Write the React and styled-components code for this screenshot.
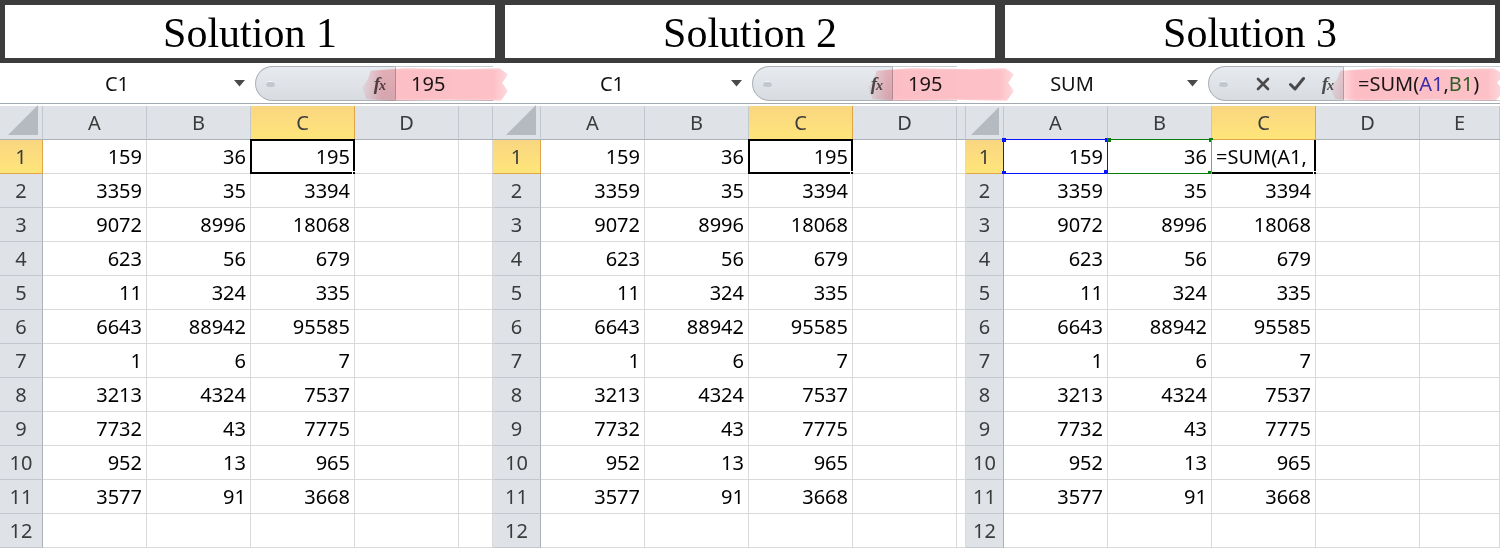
import React from 'react';
import styled, { createGlobalStyle, css } from 'styled-components';

const GlobalStyle = createGlobalStyle`
  html, body { margin: 0; padding: 0; background: #fff; }
  body { width: 1500px; height: 550px; overflow: hidden; font-family: "Noto Sans", "Open Sans", sans-serif; }
  * { box-sizing: border-box; }
`;

const Page = styled.div`
  width: 1500px;
  height: 550px;
  overflow: hidden;
  background: #fff;
`;

const TitleBand = styled.header`
  display: grid;
  grid-template-columns: repeat(3, 1fr);
  gap: 10px;
  padding: 5px;
  height: 63px;
  background: #3c3c3c;
`;

const TitleBox = styled.div`
  background: #fff;
  display: flex;
  align-items: center;
  justify-content: center;
  font-family: "Liberation Serif", "Times New Roman", serif;
  font-size: 42px;
  color: #000;
  padding-top: 2px;
`;

const Sheets = styled.div`
  display: flex;
  position: relative;
`;

const Panel = styled.section`
  width: ${p => p.$w}px;
  flex: none;
  display: flex;
  flex-direction: column;
  overflow: hidden;
`;

const FormulaBar = styled.div`
  display: flex;
  height: 41px;
  padding: 3px 0 2px;
  border-bottom: 1px solid #a3a9b0;
  background: #fff;
`;

const NameBox = styled.div`
  width: ${p => p.$w}px;
  flex: none;
  display: flex;
  align-items: center;
  font-size: 20px;
  color: #111;
`;

const NameText = styled.span`
  flex: 1;
  text-align: center;
  padding-left: 6px;
`;

const Arrow = styled.svg`
  width: 11px;
  height: 7px;
  margin: 0 10px 0 6px;
  flex: none;
`;

const FxArea = styled.div`
  width: ${p => p.$w}px;
  flex: none;
  display: flex;
  align-items: center;
  border: 1px solid #aab1b9;
  border-right: none;
  border-radius: 18px 0 0 18px;
  background: linear-gradient(#e7eaee, #d8dce1);
  padding: 0 10px 0 10px;
`;

const Knob = styled.span`
  width: 9px;
  height: 6px;
  border-radius: 3px;
  background: #c2c7cd;
  box-shadow: inset 0 1px 0 #f4f5f7;
  flex: none;
`;

const Spacer = styled.span`
  flex: 1;
`;

const ToolIcon = styled.svg`
  width: 16px;
  height: 16px;
  flex: none;
  margin-right: ${p => p.$mr || 0}px;
`;

const Fx = styled.span`
  font-family: "Liberation Serif", serif;
  font-style: italic;
  font-weight: bold;
  font-size: 19px;
  color: #4d4d4d;
  letter-spacing: -1px;
  small { font-size: 14px; }
`;

const FormulaInput = styled.div`
  flex: 1;
  display: flex;
  align-items: center;
  border-top: 1px solid #c7ccd2;
  border-bottom: 1px solid #c7ccd2;
  border-left: 1px solid #b3b9c0;
  padding-left: ${p => p.$pl || 15}px;
  font-size: 20px;
  color: #1a1a1a;
  white-space: nowrap;
`;

const RefA = styled.span` color: #3a3ad6; `;
const RefB = styled.span` color: #2f7d2f; `;

const Grid = styled.div`
  margin-top: 2px;
  display: grid;
  grid-template-columns: ${p => p.$cols};
  grid-auto-rows: 34px;
`;

const yellow = css`
  background: linear-gradient(#f9d681, #ffe57a);
  border-right-color: #e0a646;
  border-bottom-color: #e0a646;
`;

const HeadCell = styled.div`
  background: #dfe3e8;
  border-right: 1px solid #c3c8ce;
  border-bottom: 1px solid #a9b0b8;
  display: flex;
  align-items: center;
  justify-content: center;
  font-size: 20px;
  color: #3b3b3b;
  position: relative;
  ${p => p.$sel && yellow}
`;

const RowHead = styled(HeadCell)`
  border-right-color: #a9b0b8;
  border-bottom-color: #c3c8ce;
  ${p => p.$sel && yellow}
`;

const CornerTri = styled.svg`
  position: absolute;
  right: 4px;
  bottom: 4px;
  width: ${p => p.$s}px;
  height: ${p => p.$s}px;
`;

const Cell = styled.div`
  background: #fff;
  border-right: 1px solid #d9d9d9;
  border-bottom: 1px solid #d9d9d9;
  font-size: 20px;
  color: #000;
  line-height: 33px;
  text-align: right;
  padding-right: 4px;
  white-space: nowrap;
  position: relative;
  ${p => p.$edit && css`
    text-align: left;
    padding-left: 4px;
    padding-right: 0;
    overflow: visible;
    border-left: 1px solid #e35be3;
    margin-left: -1px;
  `}
`;

const ActiveFrame = styled.span`
  position: absolute;
  top: -1px;
  left: -1px;
  right: -1px;
  bottom: -1px;
  border: 2px solid #000;
  pointer-events: none;
  ${p => p.$edit && css`
    border-top: none;
    border-left: none;
    top: 0;
    left: 0;
  `}
`;

const Handle = styled.span`
  position: absolute;
  right: -4px;
  bottom: -4px;
  width: 6px;
  height: 6px;
  background: #000;
  border: 1px solid #fff;
`;

const RefFrame = styled.span`
  position: absolute;
  top: -1px;
  left: -1px;
  right: -1px;
  bottom: -1px;
  border: 1px solid ${p => p.$c};
  ${p => p.$noLeft && css`border-left: none;`}
  pointer-events: none;
`;

const RefDot = styled.span`
  position: absolute;
  width: ${p => p.$s}px;
  height: ${p => p.$s}px;
  background: ${p => p.$c};
  ${p => p.$pos}
`;

const Highlight = styled.div`
  position: absolute;
  top: 5px;
  height: 33px;
  left: ${p => p.$l}px;
  width: ${p => p.$w}px;
  background: linear-gradient(90deg, rgba(252, 190, 196, 0.2), rgb(252, 190, 196) 14%, rgb(252, 192, 198) 90%, rgba(252, 192, 198, 0.6));
  mix-blend-mode: multiply;
  filter: blur(1.6px);
  pointer-events: none;
  clip-path: polygon(6% 8%, 30% 0%, 70% 4%, 94% 0%, 100% 20%, 96% 45%, 100% 70%, 95% 100%, 60% 96%, 20% 100%, 3% 94%, 0% 60%, 4% 35%);
`;

const data = [
  [159, 36, 195],
  [3359, 35, 3394],
  [9072, 8996, 18068],
  [623, 56, 679],
  [11, 324, 335],
  [6643, 88942, 95585],
  [1, 6, 7],
  [3213, 4324, 7537],
  [7732, 43, 7775],
  [952, 13, 965],
  [3577, 91, 3668],
  [],
];

const panels = [
  { w: 493, cols: '43px repeat(4, 104px) 34px', lead: false, letters: ['A', 'B', 'C', 'D', ''], nameW: 255, fxW: 140, name: 'C1', edit: false, tri: 30 },
  { w: 464, cols: '48px repeat(4, 104px)', lead: false, letters: ['A', 'B', 'C', 'D'], nameW: 259, fxW: 140, name: 'C1', edit: false, tri: 30 },
  { w: 543, cols: '9px 38px repeat(4, 104px) 80px', lead: true, letters: ['A', 'B', 'C', 'D', 'E'], nameW: 251, fxW: 135, name: 'SUM', edit: true, tri: 28 },
];

function CornerHead({ s }) {
  return (
    <HeadCell>
      <CornerTri $s={s} viewBox="0 0 10 10">
        <polygon points="10,0 10,10 0,10" fill="#b5bac1" />
      </CornerTri>
    </HeadCell>
  );
}

function Bar({ p }) {
  return (
    <FormulaBar>
      <NameBox $w={p.nameW}>
        <NameText>{p.name}</NameText>
        <Arrow viewBox="0 0 11 7"><polygon points="0,0 11,0 5.5,6.5" fill="#4a4a4a" /></Arrow>
      </NameBox>
      <FxArea $w={p.fxW}>
        <Knob />
        <Spacer />
        {p.edit && (
          <>
            <ToolIcon $mr={18} viewBox="0 0 16 16">
              <path d="M3 3 L13 13 M13 3 L3 13" stroke="#4a4a4a" strokeWidth="2.6" strokeLinecap="round" />
            </ToolIcon>
            <ToolIcon $mr={17} viewBox="0 0 16 16">
              <path d="M1.5 8.5 L6 13 L14.5 2.5" stroke="#4a4a4a" strokeWidth="3" fill="none" strokeLinecap="round" strokeLinejoin="round" />
            </ToolIcon>
          </>
        )}
        <Fx>f<small>x</small></Fx>
      </FxArea>
      <FormulaInput $pl={p.edit ? 14 : 15}>
        {p.edit ? (
          <>=SUM(<RefA>A1</RefA>,<RefB>B1</RefB>)</>
        ) : '195'}
      </FormulaInput>
    </FormulaBar>
  );
}

function Sheet({ p }) {
  return (
    <Panel $w={p.w}>
      <Bar p={p} />
      <Grid $cols={p.cols}>
        {p.lead && <HeadCell />}
        <CornerHead s={p.tri} />
        {p.letters.map((l, i) => (
          <HeadCell key={i} $sel={l === 'C'}>{l}</HeadCell>
        ))}
        {data.map((row, r) => (
          <React.Fragment key={r}>
            {p.lead && <Cell />}
            <RowHead $sel={r === 0}>{r + 1}</RowHead>
            {p.letters.map((l, c) => {
              const first = r === 0;
              if (first && p.edit && c === 0) {
                return (
                  <Cell key={c}>
                    {row[c]}
                    <RefFrame $c="#0a14ff" />
                    <RefDot $c="#0a14ff" $s={4} $pos="left:-2px;top:-2px;" />
                    <RefDot $c="#0a14ff" $s={4} $pos="right:-2px;top:-2px;" />
                    <RefDot $c="#0a14ff" $s={4} $pos="left:-2px;bottom:-2px;" />
                    <RefDot $c="#0a14ff" $s={6} $pos="right:-3px;bottom:-3px;" />
                  </Cell>
                );
              }
              if (first && p.edit && c === 1) {
                return (
                  <Cell key={c}>
                    {row[c]}
                    <RefFrame $c="#0b7d0b" $noLeft />
                    <RefDot $c="#0b7d0b" $s={4} $pos="left:-1px;top:-2px;" />
                    <RefDot $c="#0b7d0b" $s={4} $pos="right:-2px;top:-2px;" />
                    <RefDot $c="#0b7d0b" $s={5} $pos="right:-2px;bottom:-3px;" />
                  </Cell>
                );
              }
              if (first && c === 2) {
                return p.edit ? (
                  <Cell key={c} $edit>
                    =SUM(A1,
                    <ActiveFrame $edit />
                    <Handle />
                  </Cell>
                ) : (
                  <Cell key={c}>
                    {row[c]}
                    <ActiveFrame />
                    <Handle />
                  </Cell>
                );
              }
              return <Cell key={c}>{c < 3 ? row[c] : ''}</Cell>;
            })}
          </React.Fragment>
        ))}
      </Grid>
    </Panel>
  );
}

export default function App() {
  return (
    <Page>
      <GlobalStyle />
      <TitleBand>
        <TitleBox>Solution 1</TitleBox>
        <TitleBox>Solution 2</TitleBox>
        <TitleBox>Solution 3</TitleBox>
      </TitleBand>
      <Sheets>
        {panels.map((p, i) => <Sheet key={i} p={p} />)}
        <Highlight $l={362} $w={146} />
        <Highlight $l={868} $w={146} />
        <Highlight $l={1330} $w={174} />
      </Sheets>
    </Page>
  );
}
